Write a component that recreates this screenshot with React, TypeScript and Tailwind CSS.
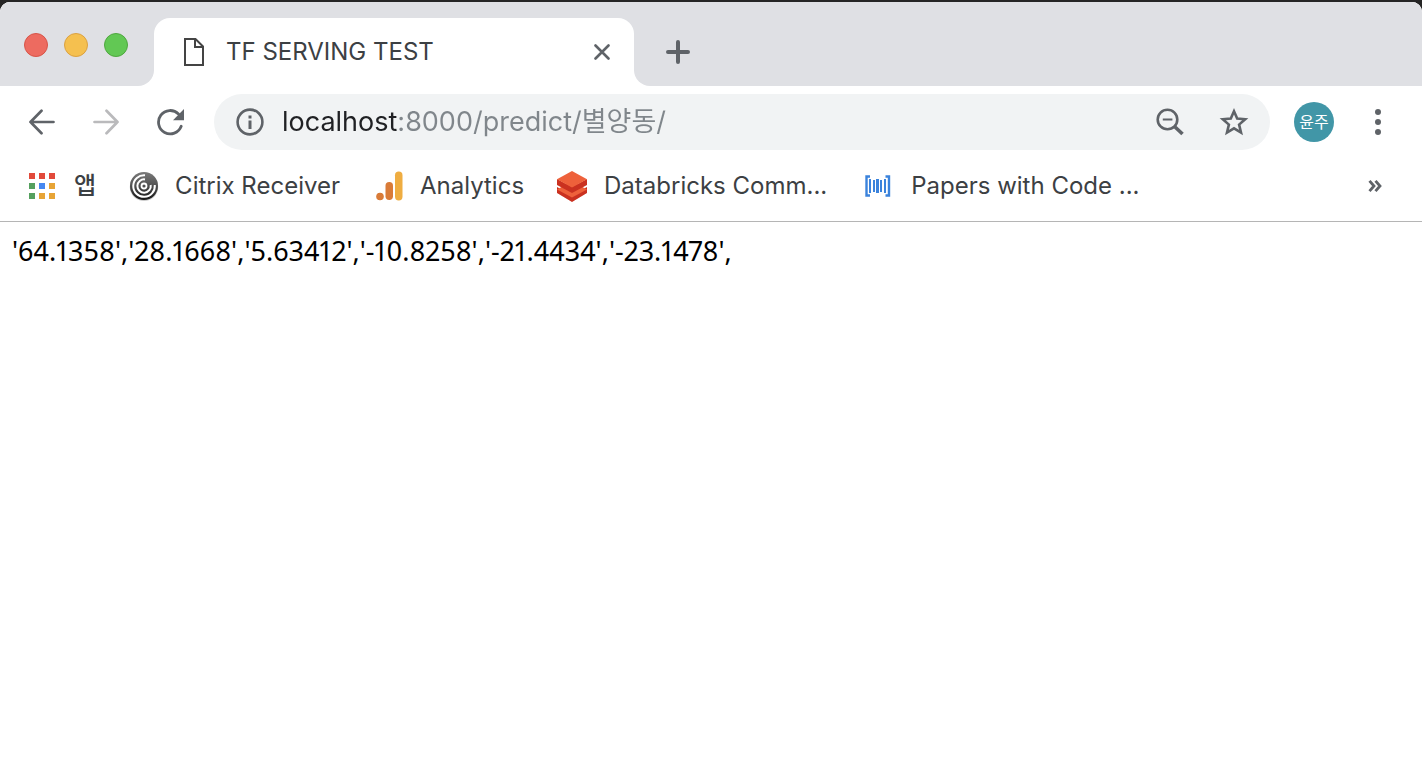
import type { ReactNode } from "react";

const BARS = [
  { x: 4, y: 5, w: 2, h: 14 },
  { x: 8, y: 6, w: 2, h: 12 },
  { x: 11, y: 5, w: 3, h: 14 },
  { x: 15, y: 6, w: 2, h: 12 },
  { x: 19, y: 5, w: 2, h: 14 },
];

const APP_COLORS = [
  "#e24a3b", "#e24a3b", "#e24a3b",
  "#55a05f", "#4688f1", "#e7a436",
  "#55a05f", "#e7a436", "#e7a436",
];

function FileIcon() {
  return (
    <svg width="20" height="28" viewBox="0 0 20 28" fill="none" stroke="#444" strokeWidth="2">
      <path d="M1 1h10.5L19 8.500V27H1z" />
      <path d="M11 1v8h8" />
    </svg>
  );
}

function CloseIcon() {
  return (
    <svg width="16" height="16" viewBox="0 0 16 16" stroke="#5f6368" strokeWidth="2.600" strokeLinecap="round">
      <path d="M1.500 1.500l13 13M14.500 1.500l-13 13" />
    </svg>
  );
}

function PlusIcon() {
  return (
    <svg width="24" height="24" viewBox="0 0 24 24" stroke="#5f6368" strokeWidth="4" strokeLinecap="round">
      <path d="M12 2v20M2 12h20" />
    </svg>
  );
}

function ArrowIcon({ forward = false }: { forward?: boolean }) {
  return (
    <svg
      width="26"
      height="26"
      viewBox="0 0 26 26"
      fill="none"
      stroke={forward ? "#bababc" : "#5f6368"}
      strokeWidth="2.700"
      strokeLinecap="round"
      strokeLinejoin="round"
    >
      {forward ? <path d="M1.500 13h23M13.500 1.800L24.500 13 13.500 24.200" /> : <path d="M24.500 13h-23M12.500 1.800L1.500 13l11 11.200" />}
    </svg>
  );
}

function ReloadIcon() {
  return (
    <svg width="28" height="28" viewBox="0 0 28 28" fill="none">
      <path d="M25.200 18.300A11.700 11.700 0 1 1 22.500 5.900" stroke="#5f6368" strokeWidth="2.800" strokeLinecap="round" />
      <path d="M28 1v11.200H17z" fill="#5f6368" />
    </svg>
  );
}

function InfoIcon() {
  return (
    <svg width="28" height="28" viewBox="0 0 28 28" fill="none">
      <circle cx="14" cy="14" r="12.400" stroke="#5f6368" strokeWidth="2.600" />
      <path d="M12.500 7.500h3v3h-3zM12.500 12.500h3v8.500h-3z" fill="#5f6368" />
    </svg>
  );
}

function ZoomOutIcon() {
  return (
    <svg width="28" height="28" viewBox="0 0 28 28" fill="none" stroke="#5f6368">
      <circle cx="11.500" cy="11.500" r="9.800" strokeWidth="2.600" />
      <path d="M6.800 11.500h9.600" strokeWidth="1.800" />
      <path d="M18.500 18.500l8 7.500" strokeWidth="3.600" />
    </svg>
  );
}

function StarIcon() {
  return (
    <svg width="30" height="30" viewBox="0 0 30 30" fill="none">
      <path
        d="M15 4.200l3.200 7.400 8 .700-6.100 5.300 1.900 7.900-7-4.200-7 4.200 1.900-7.900-6.100-5.300 8-.700z"
        stroke="#5f6368"
        strokeWidth="2.600"
        strokeMiterlimit="10"
      />
    </svg>
  );
}

function AppsIcon() {
  return (
    <svg width="26" height="26" viewBox="0 0 26 26">
      {APP_COLORS.map((color, i) => (
        <rect key={i} x={(i % 3) * 10} y={Math.floor(i / 3) * 10} width="6" height="6" fill={color} />
      ))}
    </svg>
  );
}

function CitrixIcon() {
  return (
    <svg width="30" height="32" viewBox="0 0 30 32" fill="none">
      <defs>
        <linearGradient id="citrix" x1="0" y1="0" x2="0" y2="1">
          <stop offset="0" stopColor="#7a7a7a" />
          <stop offset="0.450" stopColor="#555" />
          <stop offset="1" stopColor="#151515" />
        </linearGradient>
      </defs>
      <ellipse cx="15" cy="17" rx="14.200" ry="14" fill="#ccc" />
      <circle cx="15" cy="16" r="14" fill="url(#citrix)" />
      <g stroke="#fff" strokeWidth="2">
        <path d="M16 5.300A10.800 10.800 0 1 0 25.800 15" />
        <path d="M16 9.400A6.700 6.700 0 1 0 21.700 15" />
        <circle cx="15" cy="16" r="2.500" strokeWidth="1.800" />
      </g>
    </svg>
  );
}

function AnalyticsIcon() {
  return (
    <svg width="28" height="32" viewBox="0 0 28 32">
      <circle cx="4" cy="26.500" r="3.800" fill="#d97b38" />
      <rect x="9.500" y="12" width="7.500" height="18" rx="3.700" fill="#d97b38" />
      <rect x="19" y="1.500" width="7.500" height="29" rx="3.700" fill="#efad41" />
    </svg>
  );
}

function DatabricksIcon() {
  return (
    <svg width="32" height="32" viewBox="0 0 32 32">
      <path d="M1 17l15 8 15-8v6L16 32 1 23z" fill="#ca3120" />
      <path d="M1 19.500L16 11l15 8.500L16 27.500z" fill="#ee613b" />
      <path d="M1 9l15 8 15-8v6l-15 8-15-8z" fill="#ca3120" />
      <path d="M16 1l15 8.300L16 17.500 1 9.300z" fill="#ee613b" />
    </svg>
  );
}

function PapersIcon() {
  return (
    <svg width="26" height="24" viewBox="0 0 26 24">
      <path d="M5 2.500H1.500v19H5M20.500 2.500h3.500v19h-3.500" fill="none" stroke="#3b83dc" strokeWidth="2.400" />
      {BARS.map((bar) => (
        <rect key={bar.x} x={bar.x} y={bar.y} width={bar.w} height={bar.h} fill="#3b83dc" />
      ))}
    </svg>
  );
}

function Bookmark({ icon, className, children }: { icon: ReactNode; className: string; children: ReactNode }) {
  return (
    <a href="#" className={`flex shrink-0 items-center ${className}`}>
      {icon}
      <span>{children}</span>
    </a>
  );
}

function TabStrip() {
  return (
    <div className="flex h-[84px] bg-white">
      <div className="flex w-[154px] shrink-0 gap-4 rounded-br-2xl bg-[#dfe0e4] pt-[31px] pl-6">
        <button aria-label="Close window" className="size-6 rounded-full border border-[#d75448] bg-[#ed6b60]" />
        <button aria-label="Minimize window" className="size-6 rounded-full border border-[#dba141] bg-[#f5c04f]" />
        <button aria-label="Zoom window" className="size-6 rounded-full border border-[#4fa73f] bg-[#62c854]" />
      </div>
      <div className="w-[480px] shrink-0 bg-[#dfe0e4] pt-4">
        <div className="flex h-full items-center rounded-t-2xl bg-white pr-6 pl-[30px]">
          <FileIcon />
          <h1 className="ml-[22px] flex-1 text-2xl text-[#3c4043]">TF SERVING TEST</h1>
          <button aria-label="Close tab">
            <CloseIcon />
          </button>
        </div>
      </div>
      <div className="flex flex-1 items-center rounded-bl-2xl bg-[#dfe0e4] pt-4 pl-8">
        <button aria-label="New tab">
          <PlusIcon />
        </button>
      </div>
    </div>
  );
}

function Toolbar() {
  return (
    <div className="flex h-[72px] items-center pr-10 pl-[29px]">
      <button aria-label="Back"><ArrowIcon /></button>
      <button aria-label="Forward" className="ml-[38px]"><ArrowIcon forward /></button>
      <button aria-label="Reload" className="ml-[37px]"><ReloadIcon /></button>
      <div className="ml-[30px] flex h-14 min-w-0 flex-1 items-center rounded-full bg-[#f1f3f4] pr-[21px] pl-[22px]">
        <button aria-label="Site information"><InfoIcon /></button>
        <input
          type="text"
          aria-label="Address"
          defaultValue="localhost:8000/predict/별양동/"
          className="ml-[18px] h-10 min-w-0 flex-1 bg-[linear-gradient(to_right,#202124_116px,#80868b_116px)] bg-clip-text text-[27px] text-transparent caret-[#202124] outline-none"
        />
        <button aria-label="Zoom out"><ZoomOutIcon /></button>
        <button aria-label="Bookmark this page" className="ml-[35px]"><StarIcon /></button>
      </div>
      <button className="ml-6 size-10 rounded-full bg-[#4196a7] text-base text-white">윤주</button>
      <button aria-label="Menu" className="ml-10 flex w-2 flex-col items-center gap-1">
        <span className="size-[6px] rounded-full bg-[#5f6368]" />
        <span className="size-[6px] rounded-full bg-[#5f6368]" />
        <span className="size-[6px] rounded-full bg-[#5f6368]" />
      </button>
    </div>
  );
}

function BookmarksBar() {
  return (
    <nav className="flex h-16 items-center border-b border-[#b5b5b5] pr-10 pb-2 pl-[29px] text-2xl text-[#3c4043]">
      <Bookmark icon={<AppsIcon />} className="gap-[19px] font-medium">앱</Bookmark>
      <Bookmark icon={<CitrixIcon />} className="ml-[33px] gap-4">Citrix Receiver</Bookmark>
      <Bookmark icon={<AnalyticsIcon />} className="ml-9 gap-4">Analytics</Bookmark>
      <Bookmark icon={<DatabricksIcon />} className="ml-8 gap-4">Databricks Comm...</Bookmark>
      <Bookmark icon={<PapersIcon />} className="ml-[38px] gap-5">Papers with Code ...</Bookmark>
      <button aria-label="More bookmarks" className="ml-auto">
        <svg width="14" height="14" viewBox="0 0 14 14" fill="none" stroke="#5f6368" strokeWidth="2.800">
          <path d="M1.500 1.800L6 7l-4.500 5.200M7.500 1.800L12 7l-4.500 5.200" />
        </svg>
      </button>
    </nav>
  );
}

export default function App() {
  return (
    <div className="min-h-screen bg-[#252525] pt-[2px] font-['Inter','Noto_Sans_CJK_KR',sans-serif]">
      <div className="min-h-[calc(100vh-2px)] overflow-hidden rounded-t-[10px] bg-white">
        <header>
          <TabStrip />
          <Toolbar />
          <BookmarksBar />
        </header>
        <main className="px-3 py-[11px] font-['Noto_Sans','Noto_Sans_CJK_KR',sans-serif] text-[27px] leading-9 text-black proportional-nums">
          '64.1358','28.1668','5.63412','-10.8258','-21.4434','-23.1478',
        </main>
      </div>
    </div>
  );
}
